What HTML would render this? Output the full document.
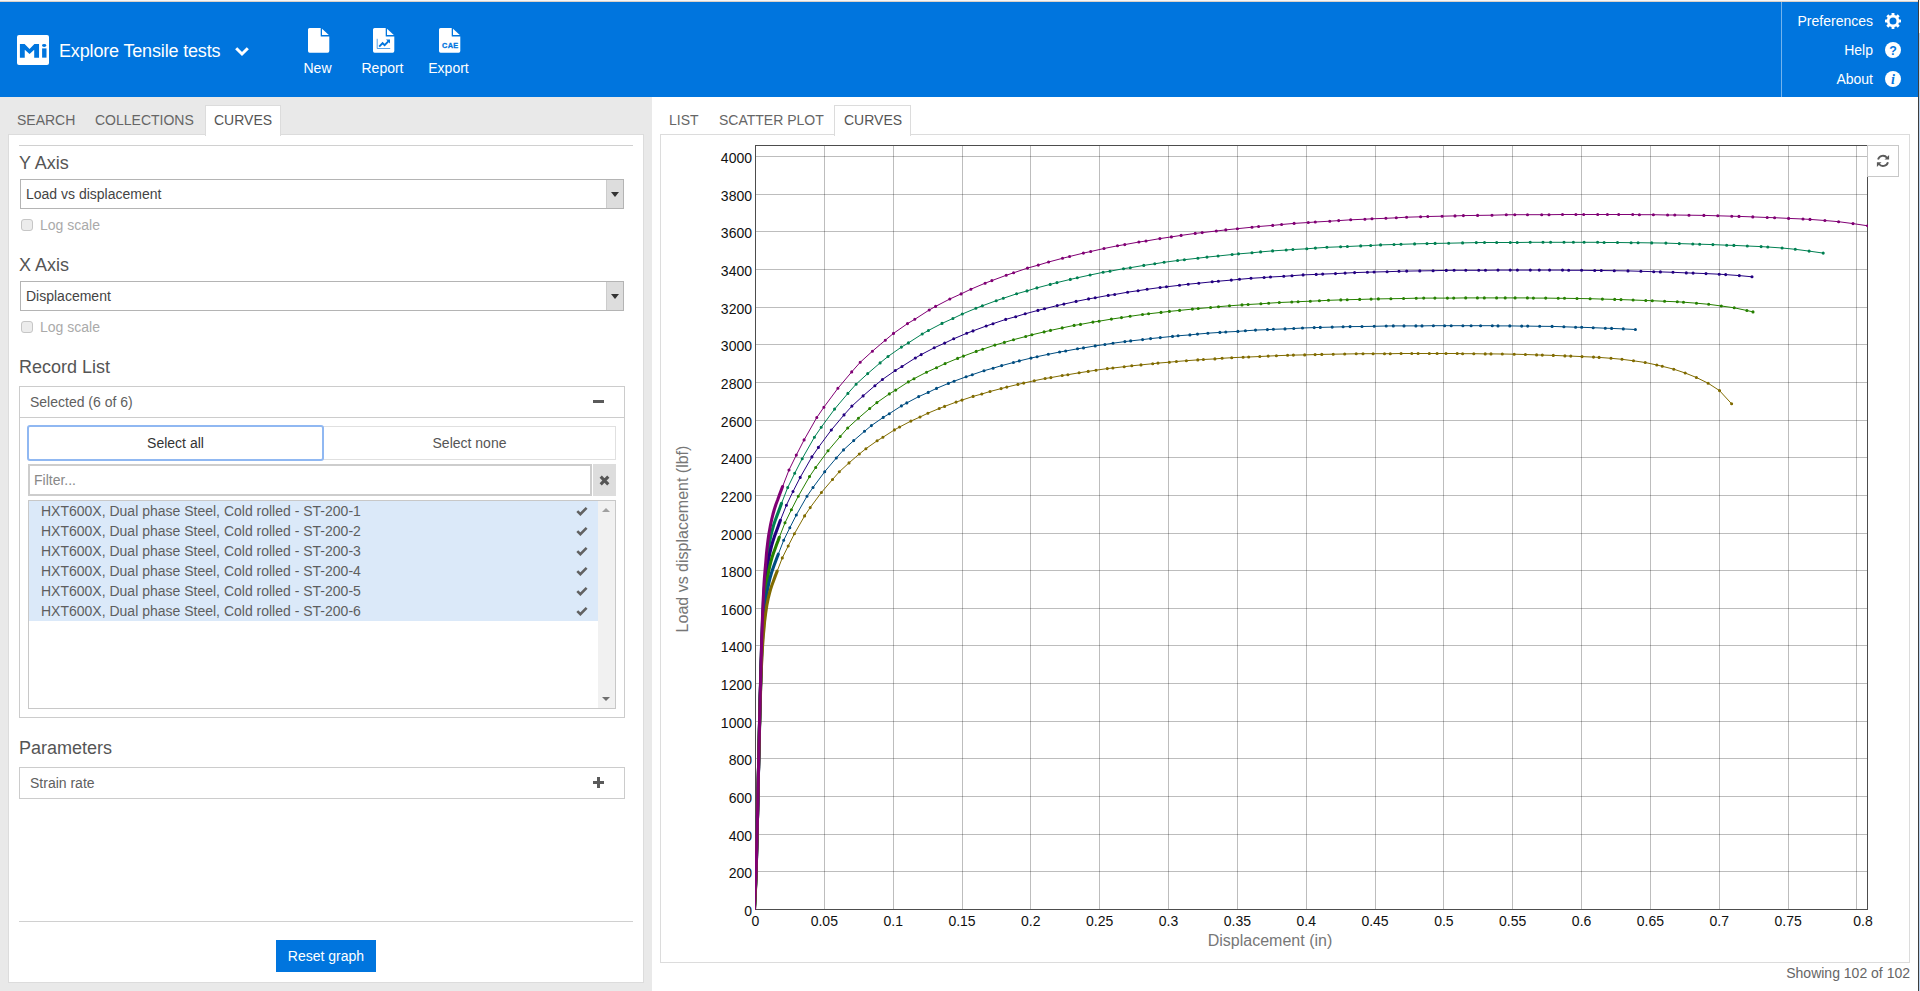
<!DOCTYPE html>
<html lang="en"><head><meta charset="utf-8"><title>Explore Tensile tests</title>
<style>
*{box-sizing:border-box;margin:0;padding:0}
html,body{width:1920px;height:991px;overflow:hidden;background:#fff}
body{font-family:"Liberation Sans",sans-serif;font-size:14px;color:#333;position:relative}
.abs{position:absolute}
#topstrip{left:0;top:0;width:1918px;height:2px;background:linear-gradient(#f6f6f6 0,#f6f6f6 1px,#dbd1c9 1px)}
#hdr{left:0;top:2px;width:1918px;height:95px;background:#0075de;color:#fff}
#hdr .t{position:absolute;white-space:nowrap;color:#fff}
#leftbg{left:0;top:97px;width:652px;height:894px;background:#e9e9e9}
#leftpanel{left:8px;top:134px;width:636px;height:849px;background:#fff;border:1px solid #dcdcdc}
.tab{position:absolute;top:105px;height:30px;line-height:30px;font-size:14px;color:#666;white-space:nowrap}
.tab.act{background:#fff;border:1px solid #dcdcdc;border-bottom:none;color:#555;height:31px;line-height:28px}
.h{position:absolute;font-size:18px;color:#555;white-space:nowrap;line-height:20px}
.sel{position:absolute;left:20px;width:604px;height:30px;border:1px solid #b4b4b4;background:#fff}
.sel span{position:absolute;left:5px;top:0;line-height:28px;font-size:14px;color:#444}
.sel i{position:absolute;right:0;top:0;width:17px;height:28px;background:#ddd;border-left:1px solid #ccc}
.sel i:after{content:"";position:absolute;left:4px;top:12px;border:4px solid transparent;border-top:5px solid #333;border-bottom:none}
.cb{position:absolute;left:21px;width:12px;height:12px;border:1px solid #c6c6c6;border-radius:3px;background:#ececec}
.cbl{position:absolute;left:40px;font-size:14px;color:#aaa;line-height:16px;white-space:nowrap}
.box{position:absolute;border:1px solid #ccc;background:#fff}
.hr{position:absolute;height:1px;background:#d0d0d0}
.li{position:absolute;left:0;width:569px;height:20px;background:#dbe9f9;font-size:14px;line-height:20px;color:#5e5e5e;padding-left:12px;white-space:nowrap}
</style></head>
<body>
<div id="topstrip" class="abs"></div>
<div id="hdr" class="abs">
<div class="abs" style="left:17px;top:33px;width:32px;height:30px;background:#fff;border-radius:2px"></div>
<svg class="abs" style="left:17px;top:33px" width="32" height="30" viewBox="0 0 32 30"><path d="M2.9 22.65V8.9h4.7l4.95 5 4.85-5h4.65v13.75h-4.85v-7.85l-4.65 4.1-4.8-4.1v7.85z" fill="#0075de"/><rect x="25.1" y="13.4" width="4.4" height="9.25" fill="#0075de"/><ellipse cx="27.15" cy="10.5" rx="2.15" ry="1.45" fill="#0075de"/></svg>
<div class="t" style="left:59px;top:39px;font-size:18px;line-height:20px;letter-spacing:-0.16px">Explore Tensile tests</div>
<svg class="abs" style="left:234px;top:44px" width="16" height="12" viewBox="0 0 16 12"><path d="M2.2 2.2 L8 8 L13.8 2.2" fill="none" stroke="#fff" stroke-width="3" stroke-linecap="butt" stroke-linejoin="miter"/></svg>
<svg class="abs" style="left:308px;top:26px" width="22" height="25" viewBox="0 0 22 25"><path d="M1.6 0h11.1v7.9a0.5 0.5 0 0 0 0.5 0.5h8.1v14.7a1.6 1.6 0 0 1-1.6 1.6h-18.1a1.6 1.6 0 0 1-1.6-1.6v-21.5a1.6 1.6 0 0 1 1.6-1.6z" fill="#fff"/><path d="M14 0.7 L20.8 6.9 L14 6.9z" fill="#fff"/></svg>
<svg class="abs" style="left:373px;top:26px" width="22" height="25" viewBox="0 0 22 25"><path d="M1.6 0h11.1v7.9a0.5 0.5 0 0 0 0.5 0.5h8.1v14.7a1.6 1.6 0 0 1-1.6 1.6h-18.1a1.6 1.6 0 0 1-1.6-1.6v-21.5a1.6 1.6 0 0 1 1.6-1.6z" fill="#fff"/><path d="M14 0.7 L20.8 6.9 L14 6.9z" fill="#fff"/><path d="M4.2 10.8v9.7h13" fill="none" stroke="#0075de" stroke-width="0.9" opacity="0.75"/><path d="M6.2 18.6l3.4-3.4 2 1.9 4.2-4.2" fill="none" stroke="#0075de" stroke-width="1.9"/><path d="M13 11.6h4v4z" fill="#0075de"/></svg>
<svg class="abs" style="left:439px;top:26px" width="22" height="25" viewBox="0 0 22 25"><path d="M1.6 0h11.1v7.9a0.5 0.5 0 0 0 0.5 0.5h8.1v14.7a1.6 1.6 0 0 1-1.6 1.6h-18.1a1.6 1.6 0 0 1-1.6-1.6v-21.5a1.6 1.6 0 0 1 1.6-1.6z" fill="#fff"/><path d="M14 0.7 L20.8 6.9 L14 6.9z" fill="#fff"/><text x="11.2" y="20.3" font-family="Liberation Sans, sans-serif" font-weight="bold" font-size="7.3" fill="#0075de" stroke="#0075de" stroke-width="0.3" text-anchor="middle" letter-spacing="0.25">CAE</text></svg>
<div class="t" style="left:317.5px;top:58px;width:100px;margin-left:-50px;text-align:center;font-size:14px;line-height:16px">New</div>
<div class="t" style="left:382.5px;top:58px;width:100px;margin-left:-50px;text-align:center;font-size:14px;line-height:16px">Report</div>
<div class="t" style="left:448.5px;top:58px;width:100px;margin-left:-50px;text-align:center;font-size:14px;line-height:16px">Export</div>
<div class="abs" style="left:1781px;top:0;width:1px;height:95px;background:rgba(255,255,255,0.45)"></div>
<div class="t" style="right:45px;top:11px;font-size:14px;line-height:16px">Preferences</div>
<div class="t" style="right:45px;top:40px;font-size:14px;line-height:16px">Help</div>
<div class="t" style="right:45px;top:69px;font-size:14px;line-height:16px">About</div>
<svg class="abs" style="left:1885px;top:11px" width="16" height="16" viewBox="0 0 16 16"><g fill="#fff"><path fill-rule="evenodd" d="M8 1.8a6.2 6.2 0 1 0 0 12.4a6.2 6.2 0 1 0 0-12.4zM8 4.5a3.5 3.5 0 1 1 0 7a3.5 3.5 0 1 1 0-7z"/><rect x="6.55" y="0" width="2.9" height="3" rx="0.4" transform="rotate(0 8 8)"/><rect x="6.55" y="0" width="2.9" height="3" rx="0.4" transform="rotate(45 8 8)"/><rect x="6.55" y="0" width="2.9" height="3" rx="0.4" transform="rotate(90 8 8)"/><rect x="6.55" y="0" width="2.9" height="3" rx="0.4" transform="rotate(135 8 8)"/><rect x="6.55" y="0" width="2.9" height="3" rx="0.4" transform="rotate(180 8 8)"/><rect x="6.55" y="0" width="2.9" height="3" rx="0.4" transform="rotate(225 8 8)"/><rect x="6.55" y="0" width="2.9" height="3" rx="0.4" transform="rotate(270 8 8)"/><rect x="6.55" y="0" width="2.9" height="3" rx="0.4" transform="rotate(315 8 8)"/></g></svg>
<svg class="abs" style="left:1885px;top:40px" width="16" height="16" viewBox="0 0 16 16"><circle cx="8" cy="8" r="8" fill="#fff"/><text x="8" y="12.6" font-family="Liberation Sans, sans-serif" font-weight="bold" font-size="12.4" fill="#0075de" text-anchor="middle">?</text></svg>
<svg class="abs" style="left:1885px;top:69px" width="16" height="16" viewBox="0 0 16 16"><circle cx="8" cy="8" r="8" fill="#fff"/><text x="8" y="12.8" font-family="Liberation Serif, serif" font-weight="bold" font-style="italic" font-size="14" fill="#0075de" text-anchor="middle">i</text></svg>
</div>
<div id="leftbg" class="abs"></div>
<div id="leftpanel" class="abs"></div>
<div class="tab" style="left:17px">SEARCH</div>
<div class="tab" style="left:95px">COLLECTIONS</div>
<div class="tab act" style="left:205px;width:76px;padding-left:8px">CURVES</div>
<div class="hr" style="left:19px;top:145px;width:614px"></div>
<div class="h" style="left:19px;top:153px">Y Axis</div>
<div class="sel" style="top:179px"><span>Load vs displacement</span><i></i></div>
<div class="cb" style="top:219px"></div><div class="cbl" style="top:217px">Log scale</div>
<div class="h" style="left:19px;top:255px">X Axis</div>
<div class="sel" style="top:281px"><span>Displacement</span><i></i></div>
<div class="cb" style="top:321px"></div><div class="cbl" style="top:319px">Log scale</div>
<div class="h" style="left:19px;top:357px">Record List</div>
<div class="box" style="left:19px;top:386px;width:606px;height:332px"></div>
<div class="hr" style="left:20px;top:417px;width:604px;background:#ccc"></div>
<div class="abs" style="left:30px;top:394px;font-size:14px;line-height:16px;color:#606060">Selected (6 of 6)</div>
<div class="abs" style="left:593px;top:400px;width:11px;height:3px;background:#5a5a5a"></div>
<div class="abs" style="left:323px;top:426px;width:293px;height:34px;border:1px solid #e0e0e0;background:#fff;text-align:center;line-height:32px;font-size:14px;color:#555">Select none</div>
<div class="abs" style="left:27px;top:425px;width:297px;height:36px;border:2px solid #90b8f2;border-radius:3px;background:#fff;text-align:center;line-height:32px;font-size:14px;color:#333">Select all</div>
<div class="abs" style="left:28px;top:464px;width:564px;height:32px;border:2px solid #cdcdcd;background:#fff;padding-left:4px;line-height:28px;font-size:14px;color:#888">Filter...</div>
<div class="abs" style="left:593px;top:464px;width:23px;height:32px;background:#ddd"></div>
<svg class="abs" style="left:599px;top:475px" width="11" height="11" viewBox="0 0 11 11"><path d="M1.7 1.7l7.6 7.6M9.3 1.7l-7.6 7.6" stroke="#555" stroke-width="3.1" fill="none"/></svg>
<div class="box" style="left:28px;top:500px;width:588px;height:209px;border-color:#c8c8c8">
<div class="li" style="top:0px">HXT600X, Dual phase Steel, Cold rolled - ST-200-1</div>
<svg class="abs" style="left:547px;top:5px" width="12" height="10" viewBox="0 0 12 10"><path d="M1.3 5.1l3.1 3.1 6.2-6.4" fill="none" stroke="#626262" stroke-width="2.6"/></svg>
<div class="li" style="top:20px">HXT600X, Dual phase Steel, Cold rolled - ST-200-2</div>
<svg class="abs" style="left:547px;top:25px" width="12" height="10" viewBox="0 0 12 10"><path d="M1.3 5.1l3.1 3.1 6.2-6.4" fill="none" stroke="#626262" stroke-width="2.6"/></svg>
<div class="li" style="top:40px">HXT600X, Dual phase Steel, Cold rolled - ST-200-3</div>
<svg class="abs" style="left:547px;top:45px" width="12" height="10" viewBox="0 0 12 10"><path d="M1.3 5.1l3.1 3.1 6.2-6.4" fill="none" stroke="#626262" stroke-width="2.6"/></svg>
<div class="li" style="top:60px">HXT600X, Dual phase Steel, Cold rolled - ST-200-4</div>
<svg class="abs" style="left:547px;top:65px" width="12" height="10" viewBox="0 0 12 10"><path d="M1.3 5.1l3.1 3.1 6.2-6.4" fill="none" stroke="#626262" stroke-width="2.6"/></svg>
<div class="li" style="top:80px">HXT600X, Dual phase Steel, Cold rolled - ST-200-5</div>
<svg class="abs" style="left:547px;top:85px" width="12" height="10" viewBox="0 0 12 10"><path d="M1.3 5.1l3.1 3.1 6.2-6.4" fill="none" stroke="#626262" stroke-width="2.6"/></svg>
<div class="li" style="top:100px">HXT600X, Dual phase Steel, Cold rolled - ST-200-6</div>
<svg class="abs" style="left:547px;top:105px" width="12" height="10" viewBox="0 0 12 10"><path d="M1.3 5.1l3.1 3.1 6.2-6.4" fill="none" stroke="#626262" stroke-width="2.6"/></svg>
<div class="abs" style="left:569px;top:0;width:17px;height:207px;background:#f1f1f1"></div>
<div class="abs" style="left:573px;top:7px;border:4px solid transparent;border-bottom:4px solid #a0a0a0;border-top:none"></div>
<div class="abs" style="left:573px;top:196px;border:4px solid transparent;border-top:4px solid #707070;border-bottom:none"></div>
</div>
<div class="h" style="left:19px;top:738px">Parameters</div>
<div class="box" style="left:19px;top:767px;width:606px;height:32px"></div>
<div class="abs" style="left:30px;top:775px;font-size:14px;line-height:16px;color:#606060">Strain rate</div>
<div class="abs" style="left:593px;top:781px;width:11px;height:3px;background:#5a5a5a"></div><div class="abs" style="left:597px;top:777px;width:3px;height:11px;background:#5a5a5a"></div>
<div class="hr" style="left:19px;top:921px;width:614px"></div>
<div class="abs" style="left:276px;top:940px;width:100px;height:32px;background:#0075de;color:#fff;text-align:center;line-height:32px;font-size:14px">Reset graph</div>
<div class="abs" style="left:660px;top:134px;width:1250px;height:829px;border:1px solid #dcdcdc;background:#fff"></div>
<div class="tab" style="left:669px">LIST</div>
<div class="tab" style="left:719px">SCATTER PLOT</div>
<div class="tab act" style="left:834px;width:77px;padding-left:9px">CURVES</div>
<div class="abs" style="right:10px;top:965px;font-size:14px;line-height:16px;color:#666;white-space:nowrap">Showing 102 of 102</div>
<div class="abs" style="left:1918px;top:0;width:1px;height:991px;background:#3c3c3c"></div>
<div class="abs" style="left:1919px;top:0;width:1px;height:991px;background:linear-gradient(#fff 0,#fff 33px,#bcd3ee 33px)"></div>
<svg class="abs" style="left:0;top:0" width="1920" height="991" viewBox="0 0 1920 991">
<path d="M824.5 146 V910 M893.5 146 V910 M962.5 146 V910 M1030.5 146 V910 M1099.5 146 V910 M1168.5 146 V910 M1237.5 146 V910 M1306.5 146 V910 M1375.5 146 V910 M1443.5 146 V910 M1512.5 146 V910 M1581.5 146 V910 M1650.5 146 V910 M1719.5 146 V910 M1788.5 146 V910 M1856.5 146 V910" stroke="#000" stroke-opacity="0.26" stroke-width="1" fill="none" shape-rendering="crispEdges"/>
<path d="M755 871.5 H1867 M755 834.5 H1867 M755 796.5 H1867 M755 758.5 H1867 M755 721.5 H1867 M755 683.5 H1867 M755 645.5 H1867 M755 608.5 H1867 M755 570.5 H1867 M755 533.5 H1867 M755 495.5 H1867 M755 457.5 H1867 M755 420.5 H1867 M755 382.5 H1867 M755 344.5 H1867 M755 307.5 H1867 M755 269.5 H1867 M755 231.5 H1867 M755 194.5 H1867 M755 156.5 H1867" stroke="#000" stroke-opacity="0.26" stroke-width="1" fill="none" shape-rendering="crispEdges"/>
<path d="M755.5 145.5 H1867.5 V909.5 H755.5 Z" stroke="#4d4d4d" stroke-width="1" fill="none" shape-rendering="crispEdges"/>
<clipPath id="cp"><rect x="755" y="146" width="1113" height="764"/></clipPath>
<g clip-path="url(#cp)">
<path d="M754.3 909.5 L754.6 904.7 L754.8 899.9 L755.0 895.1 L755.2 890.3 L755.5 885.5 L755.7 880.7 L755.9 875.9 L756.1 871.1 L756.2 866.3 L756.4 861.5 L756.5 856.7 L756.6 851.9 L756.7 847.1 L756.9 842.3 L757.0 837.5 L757.1 832.7 L757.2 827.9 L757.3 823.1 L757.5 818.3 L757.6 813.5 L757.7 808.7 L757.8 803.9 L757.9 799.1 L758.0 794.3 L758.1 789.5 L758.2 784.7 L758.3 779.9 L758.4 775.1 L758.5 770.3 L758.6 765.5 L758.7 760.7 L758.8 755.9 L758.9 751.1 L759.0 746.3 L759.1 741.5 L759.2 736.7 L759.3 731.9 L759.4 727.1 L759.6 722.3 L759.7 717.5 L759.8 712.7 L759.9 707.9 L760.0 703.1 L760.1 698.3 L760.3 693.5 L760.4 688.7 L760.5 683.9 L760.6 679.1 L760.8 674.3 L760.9 669.5 L761.0 664.7 L761.2 659.9 L761.3 655.1 L761.5 650.3 L761.6 645.5 L761.8 640.7 L762.0 635.9 L762.1 631.1 L762.3 626.3 L762.5 621.5 L762.7 616.7 L762.9 611.9 L763.1 607.1 L763.4 602.3 L763.7 597.5 L764.0 592.7 L764.4 587.9 L764.8 583.1 L765.2 578.3 L765.6 573.5 L766.0 568.7 L766.5 563.9 L767.0 559.1 L767.6 554.3 L768.3 549.5 L769.1 544.7 L770.0 539.9 L771.0 535.1 L772.2 530.3 L773.5 525.5 L775.1 520.7 L776.8 516.1 L778.5 511.6 L780.2 507.0 L781.5 503.4 L787.7 487.6 L794.7 473.3 L802.2 458.7 L814.4 437.2 L821.2 427.3 L834.6 409.1 L847.9 393.4 L856.1 384.2 L867.7 373.6 L880.1 362.9 L888.0 356.5 L901.4 347.1 L908.4 342.9 L922.2 334.0 L928.4 330.5 L942.0 323.4 L952.9 318.5 L962.3 314.0 L975.9 308.3 L982.4 305.8 L996.2 300.7 L1003.3 298.3 L1016.6 293.8 L1027.0 290.9 L1036.9 287.9 L1050.2 284.4 L1057.0 282.6 L1070.3 279.4 L1077.3 277.8 L1090.1 275.0 L1103.1 272.3 L1110.0 271.2 L1123.5 268.7 L1130.3 267.7 L1143.8 265.4 L1154.8 263.8 L1164.1 262.3 L1177.6 260.5 L1184.4 259.7 L1197.9 258.2 L1207.0 257.1 L1218.1 256.0 L1232.1 254.5 L1238.5 253.9 L1252.0 252.8 L1260.6 251.9 L1272.6 250.9 L1286.2 250.0 L1292.9 249.5 L1306.8 248.8 L1315.4 248.1 L1326.9 247.3 L1340.6 246.8 L1347.4 246.5 L1360.7 245.9 L1370.7 245.5 L1380.6 244.9 L1394.0 244.5 L1401.0 244.3 L1414.6 243.9 L1427.0 243.6 L1435.1 243.4 L1448.7 243.2 L1462.6 242.9 L1476.3 242.6 L1484.5 242.5 L1496.7 242.5 L1510.3 242.5 L1517.2 242.5 L1530.2 242.3 L1543.0 242.3 L1550.6 242.3 L1564.0 242.3 L1573.4 242.3 L1584.1 242.3 L1597.6 242.3 L1604.1 242.5 L1617.5 242.5 L1631.1 242.7 L1638.1 242.7 L1651.7 242.9 L1665.9 243.1 L1679.3 243.6 L1692.8 244.0 L1699.7 244.2 L1712.9 244.6 L1726.7 245.2 L1733.9 245.4 L1747.3 246.0 L1761.1 246.6 L1767.8 247.0 L1782.1 248.0 L1795.3 249.3 L1809.1 251.1 L1823.2 253.1" fill="none" stroke="#008052" stroke-width="1"/>
<path d="M754.3 909.5 L754.6 904.7 L754.8 899.9 L755.0 895.1 L755.2 890.3 L755.5 885.5 L755.7 880.7 L755.9 875.9 L756.1 871.1 L756.2 866.3 L756.4 861.5 L756.5 856.7 L756.6 851.9 L756.7 847.1 L756.9 842.3 L757.0 837.5 L757.1 832.7 L757.2 827.9 L757.3 823.1 L757.5 818.3 L757.6 813.5 L757.7 808.7 L757.8 803.9 L757.9 799.1 L758.0 794.3 L758.1 789.5 L758.2 784.7 L758.3 779.9 L758.4 775.1 L758.5 770.3 L758.6 765.5 L758.7 760.7 L758.8 755.9 L758.9 751.1 L759.0 746.3 L759.1 741.5 L759.2 736.7 L759.3 731.9 L759.4 727.1 L759.6 722.3 L759.7 717.5 L759.8 712.7 L759.9 707.9 L760.0 703.1 L760.1 698.3 L760.3 693.5 L760.4 688.7 L760.5 683.9 L760.6 679.1 L760.8 674.3 L760.9 669.5 L761.0 664.7 L761.2 659.9 L761.3 655.1 L761.5 650.3 L761.6 645.5 L761.8 640.7 L762.0 635.9 L762.1 631.1 L762.3 626.3 L762.5 621.5 L762.7 616.7 L762.9 611.9 L763.1 607.1 L763.4 602.3 L763.7 597.5 L764.0 592.7 L764.4 587.9 L764.8 583.1 L765.2 578.3 L765.6 573.5 L766.0 568.7 L766.5 563.9 L767.0 559.1 L767.6 554.3 L768.3 549.5 L769.1 544.7 L770.0 539.9 L771.0 535.1 L772.2 530.3 L773.5 525.5 L775.1 520.7 L776.8 516.1 L778.5 511.6 L780.2 507.0 L781.5 503.4" fill="none" stroke="#008052" stroke-width="3.1" stroke-linecap="round" stroke-linejoin="round"/>
<path d="M787.7 487.6h0M794.7 473.3h0M802.2 458.7h0M814.4 437.2h0M821.2 427.3h0M834.6 409.1h0M847.9 393.4h0M856.1 384.2h0M867.7 373.6h0M880.1 362.9h0M888.0 356.5h0M901.4 347.1h0M908.4 342.9h0M922.2 334.0h0M928.4 330.5h0M942.0 323.4h0M952.9 318.5h0M962.3 314.0h0M975.9 308.3h0M982.4 305.8h0M996.2 300.7h0M1003.3 298.3h0M1016.6 293.8h0M1027.0 290.9h0M1036.9 287.9h0M1050.2 284.4h0M1057.0 282.6h0M1070.3 279.4h0M1077.3 277.8h0M1090.1 275.0h0M1103.1 272.3h0M1110.0 271.2h0M1123.5 268.7h0M1130.3 267.7h0M1143.8 265.4h0M1154.8 263.8h0M1164.1 262.3h0M1177.6 260.5h0M1184.4 259.7h0M1197.9 258.2h0M1207.0 257.1h0M1218.1 256.0h0M1232.1 254.5h0M1238.5 253.9h0M1252.0 252.8h0M1260.6 251.9h0M1272.6 250.9h0M1286.2 250.0h0M1292.9 249.5h0M1306.8 248.8h0M1315.4 248.1h0M1326.9 247.3h0M1340.6 246.8h0M1347.4 246.5h0M1360.7 245.9h0M1370.7 245.5h0M1380.6 244.9h0M1394.0 244.5h0M1401.0 244.3h0M1414.6 243.9h0M1427.0 243.6h0M1435.1 243.4h0M1448.7 243.2h0M1462.6 242.9h0M1476.3 242.6h0M1484.5 242.5h0M1496.7 242.5h0M1510.3 242.5h0M1517.2 242.5h0M1530.2 242.3h0M1543.0 242.3h0M1550.6 242.3h0M1564.0 242.3h0M1573.4 242.3h0M1584.1 242.3h0M1597.6 242.3h0M1604.1 242.5h0M1617.5 242.5h0M1631.1 242.7h0M1638.1 242.7h0M1651.7 242.9h0M1665.9 243.1h0M1679.3 243.6h0M1692.8 244.0h0M1699.7 244.2h0M1712.9 244.6h0M1726.7 245.2h0M1733.9 245.4h0M1747.3 246.0h0M1761.1 246.6h0M1767.8 247.0h0M1782.1 248.0h0M1795.3 249.3h0M1809.1 251.1h0M1823.2 253.1h0" fill="none" stroke="#008052" stroke-width="3.1" stroke-linecap="round"/>
<path d="M754.4 909.5 L754.6 904.9 L754.8 900.3 L755.0 895.7 L755.3 891.1 L755.5 886.5 L755.7 881.9 L755.9 877.3 L756.0 872.7 L756.2 868.1 L756.3 863.5 L756.5 858.9 L756.6 854.3 L756.7 849.7 L756.8 845.1 L756.9 840.5 L757.0 835.9 L757.1 831.3 L757.3 826.7 L757.4 822.1 L757.5 817.5 L757.6 812.9 L757.7 808.3 L757.8 803.7 L757.9 799.1 L758.0 794.5 L758.1 789.9 L758.2 785.3 L758.3 780.7 L758.4 776.1 L758.5 771.5 L758.6 766.9 L758.7 762.3 L758.8 757.7 L758.9 753.1 L759.0 748.5 L759.1 743.9 L759.2 739.3 L759.3 734.7 L759.4 730.1 L759.5 725.5 L759.6 720.9 L759.7 716.3 L759.8 711.7 L760.0 707.1 L760.1 702.5 L760.2 697.9 L760.3 693.3 L760.4 688.7 L760.6 684.1 L760.7 679.5 L760.8 674.9 L760.9 670.3 L761.1 665.7 L761.2 661.1 L761.4 656.5 L761.5 651.9 L761.7 647.3 L761.9 642.7 L762.0 638.1 L762.2 633.5 L762.4 628.9 L762.6 624.3 L762.8 619.7 L763.1 615.1 L763.3 610.5 L763.6 605.9 L764.0 601.3 L764.4 596.7 L764.7 592.1 L765.1 587.5 L765.6 582.9 L766.0 578.3 L766.5 573.7 L767.1 569.1 L767.8 564.5 L768.5 559.9 L769.4 555.3 L770.4 550.7 L771.5 546.1 L772.8 541.5 L774.3 536.9 L775.9 532.5 L777.5 528.2 L779.1 523.8 L780.4 520.3 L786.4 505.2 L793.0 491.5 L800.2 477.4 L811.9 456.9 L818.4 447.4 L831.3 430.0 L844.0 414.9 L851.9 406.1 L863.1 395.9 L874.9 385.7 L882.4 379.5 L895.3 370.5 L902.0 366.5 L915.3 358.0 L921.2 354.6 L934.2 347.8 L944.7 343.1 L953.7 338.8 L966.7 333.3 L973.0 330.9 L986.2 326.0 L993.0 323.7 L1005.7 319.4 L1015.7 316.7 L1025.2 313.8 L1037.9 310.4 L1044.5 308.7 L1057.2 305.6 L1063.9 304.1 L1076.1 301.4 L1088.6 298.9 L1095.2 297.8 L1108.2 295.4 L1114.7 294.5 L1127.6 292.2 L1138.1 290.7 L1147.1 289.3 L1160.1 287.5 L1166.5 286.8 L1179.5 285.3 L1188.2 284.2 L1198.8 283.2 L1212.2 281.8 L1218.4 281.2 L1231.3 280.1 L1239.5 279.3 L1251.0 278.3 L1264.1 277.5 L1270.5 277.0 L1283.8 276.3 L1292.0 275.7 L1303.1 274.9 L1316.2 274.4 L1322.7 274.1 L1335.5 273.6 L1345.1 273.1 L1354.6 272.6 L1367.4 272.2 L1374.1 272.0 L1387.1 271.7 L1399.0 271.3 L1406.7 271.1 L1419.8 270.9 L1433.1 270.7 L1446.3 270.4 L1454.1 270.3 L1465.8 270.3 L1478.8 270.3 L1485.5 270.3 L1498.0 270.1 L1510.2 270.1 L1517.4 270.1 L1530.3 270.1 L1539.3 270.1 L1549.6 270.1 L1562.5 270.1 L1568.7 270.3 L1581.6 270.3 L1594.7 270.5 L1601.3 270.5 L1614.3 270.7 L1628.0 270.9 L1640.9 271.3 L1653.7 271.7 L1660.4 271.9 L1673.0 272.3 L1686.3 272.9 L1693.1 273.1 L1706.0 273.6 L1719.2 274.2 L1725.7 274.6 L1739.3 275.6 L1752.0 276.8" fill="none" stroke="#230080" stroke-width="1"/>
<path d="M754.4 909.5 L754.6 904.9 L754.8 900.3 L755.0 895.7 L755.3 891.1 L755.5 886.5 L755.7 881.9 L755.9 877.3 L756.0 872.7 L756.2 868.1 L756.3 863.5 L756.5 858.9 L756.6 854.3 L756.7 849.7 L756.8 845.1 L756.9 840.5 L757.0 835.9 L757.1 831.3 L757.3 826.7 L757.4 822.1 L757.5 817.5 L757.6 812.9 L757.7 808.3 L757.8 803.7 L757.9 799.1 L758.0 794.5 L758.1 789.9 L758.2 785.3 L758.3 780.7 L758.4 776.1 L758.5 771.5 L758.6 766.9 L758.7 762.3 L758.8 757.7 L758.9 753.1 L759.0 748.5 L759.1 743.9 L759.2 739.3 L759.3 734.7 L759.4 730.1 L759.5 725.5 L759.6 720.9 L759.7 716.3 L759.8 711.7 L760.0 707.1 L760.1 702.5 L760.2 697.9 L760.3 693.3 L760.4 688.7 L760.6 684.1 L760.7 679.5 L760.8 674.9 L760.9 670.3 L761.1 665.7 L761.2 661.1 L761.4 656.5 L761.5 651.9 L761.7 647.3 L761.9 642.7 L762.0 638.1 L762.2 633.5 L762.4 628.9 L762.6 624.3 L762.8 619.7 L763.1 615.1 L763.3 610.5 L763.6 605.9 L764.0 601.3 L764.4 596.7 L764.7 592.1 L765.1 587.5 L765.6 582.9 L766.0 578.3 L766.5 573.7 L767.1 569.1 L767.8 564.5 L768.5 559.9 L769.4 555.3 L770.4 550.7 L771.5 546.1 L772.8 541.5 L774.3 536.9 L775.9 532.5 L777.5 528.2 L779.1 523.8 L780.4 520.3" fill="none" stroke="#230080" stroke-width="3.1" stroke-linecap="round" stroke-linejoin="round"/>
<path d="M786.4 505.2h0M793.0 491.5h0M800.2 477.4h0M811.9 456.9h0M818.4 447.4h0M831.3 430.0h0M844.0 414.9h0M851.9 406.1h0M863.1 395.9h0M874.9 385.7h0M882.4 379.5h0M895.3 370.5h0M902.0 366.5h0M915.3 358.0h0M921.2 354.6h0M934.2 347.8h0M944.7 343.1h0M953.7 338.8h0M966.7 333.3h0M973.0 330.9h0M986.2 326.0h0M993.0 323.7h0M1005.7 319.4h0M1015.7 316.7h0M1025.2 313.8h0M1037.9 310.4h0M1044.5 308.7h0M1057.2 305.6h0M1063.9 304.1h0M1076.1 301.4h0M1088.6 298.9h0M1095.2 297.8h0M1108.2 295.4h0M1114.7 294.5h0M1127.6 292.2h0M1138.1 290.7h0M1147.1 289.3h0M1160.1 287.5h0M1166.5 286.8h0M1179.5 285.3h0M1188.2 284.2h0M1198.8 283.2h0M1212.2 281.8h0M1218.4 281.2h0M1231.3 280.1h0M1239.5 279.3h0M1251.0 278.3h0M1264.1 277.5h0M1270.5 277.0h0M1283.8 276.3h0M1292.0 275.7h0M1303.1 274.9h0M1316.2 274.4h0M1322.7 274.1h0M1335.5 273.6h0M1345.1 273.1h0M1354.6 272.6h0M1367.4 272.2h0M1374.1 272.0h0M1387.1 271.7h0M1399.0 271.3h0M1406.7 271.1h0M1419.8 270.9h0M1433.1 270.7h0M1446.3 270.4h0M1454.1 270.3h0M1465.8 270.3h0M1478.8 270.3h0M1485.5 270.3h0M1498.0 270.1h0M1510.2 270.1h0M1517.4 270.1h0M1530.3 270.1h0M1539.3 270.1h0M1549.6 270.1h0M1562.5 270.1h0M1568.7 270.3h0M1581.6 270.3h0M1594.7 270.5h0M1601.3 270.5h0M1614.3 270.7h0M1628.0 270.9h0M1640.9 271.3h0M1653.7 271.7h0M1660.4 271.9h0M1673.0 272.3h0M1686.3 272.9h0M1693.1 273.1h0M1706.0 273.6h0M1719.2 274.2h0M1725.7 274.6h0M1739.3 275.6h0M1752.0 276.8h0" fill="none" stroke="#230080" stroke-width="3.1" stroke-linecap="round"/>
<path d="M754.4 909.5 L754.7 905.1 L754.9 900.7 L755.1 896.3 L755.3 891.9 L755.5 887.5 L755.7 883.1 L755.9 878.7 L756.0 874.3 L756.2 869.9 L756.3 865.5 L756.4 861.1 L756.5 856.7 L756.6 852.3 L756.8 847.9 L756.9 843.5 L757.0 839.1 L757.1 834.7 L757.2 830.3 L757.3 825.9 L757.4 821.5 L757.5 817.1 L757.6 812.7 L757.7 808.3 L757.8 803.9 L757.9 799.5 L758.0 795.1 L758.1 790.7 L758.2 786.3 L758.2 781.9 L758.3 777.5 L758.4 773.1 L758.5 768.7 L758.6 764.3 L758.7 759.9 L758.8 755.5 L758.9 751.1 L759.0 746.7 L759.1 742.3 L759.2 737.9 L759.3 733.5 L759.4 729.1 L759.5 724.7 L759.7 720.3 L759.8 715.9 L759.9 711.5 L760.0 707.1 L760.1 702.7 L760.2 698.3 L760.3 693.9 L760.5 689.5 L760.6 685.1 L760.7 680.7 L760.8 676.3 L761.0 671.9 L761.1 667.5 L761.3 663.1 L761.4 658.7 L761.6 654.3 L761.8 649.9 L761.9 645.5 L762.1 641.1 L762.3 636.7 L762.5 632.3 L762.7 627.9 L763.0 623.5 L763.3 619.1 L763.6 614.7 L764.0 610.3 L764.3 605.9 L764.7 601.5 L765.1 597.1 L765.6 592.7 L766.0 588.3 L766.6 583.9 L767.2 579.5 L768.0 575.1 L768.8 570.7 L769.7 566.3 L770.8 561.9 L772.0 557.5 L773.5 553.1 L775.0 548.9 L776.5 544.7 L778.1 540.6 L779.3 537.3 L785.0 522.8 L791.4 509.7 L798.3 496.2 L809.5 476.6 L815.7 467.5 L828.0 450.8 L840.2 436.5 L847.7 428.0 L858.4 418.2 L869.7 408.5 L876.9 402.6 L889.3 393.9 L895.7 390.1 L908.3 381.9 L914.0 378.7 L926.5 372.2 L936.5 367.7 L945.1 363.6 L957.6 358.4 L963.5 356.1 L976.2 351.4 L982.7 349.2 L994.9 345.1 L1004.4 342.4 L1013.5 339.7 L1025.7 336.5 L1031.9 334.8 L1044.1 331.9 L1050.5 330.4 L1062.2 327.9 L1074.1 325.4 L1080.5 324.4 L1092.9 322.1 L1099.1 321.2 L1111.4 319.1 L1121.5 317.6 L1130.1 316.3 L1142.5 314.5 L1148.6 313.8 L1161.0 312.4 L1169.4 311.4 L1179.6 310.4 L1192.4 309.1 L1198.2 308.5 L1210.6 307.5 L1218.5 306.7 L1229.5 305.8 L1242.0 304.9 L1248.1 304.5 L1260.9 303.8 L1268.7 303.2 L1279.3 302.5 L1291.8 302.0 L1298.1 301.7 L1310.3 301.2 L1319.4 300.8 L1328.5 300.3 L1340.8 299.9 L1347.2 299.7 L1359.7 299.4 L1371.1 299.1 L1378.4 298.9 L1390.9 298.7 L1403.6 298.5 L1416.2 298.2 L1423.7 298.1 L1434.9 298.1 L1447.4 298.1 L1453.7 298.1 L1465.7 297.9 L1477.4 297.9 L1484.3 297.9 L1496.6 297.9 L1505.2 297.9 L1515.1 297.9 L1527.4 297.9 L1533.4 298.1 L1545.7 298.1 L1558.2 298.3 L1564.5 298.3 L1577.0 298.5 L1590.1 298.7 L1602.4 299.1 L1614.7 299.4 L1621.0 299.6 L1633.1 300.0 L1645.8 300.5 L1652.3 300.7 L1664.6 301.3 L1677.3 301.8 L1683.5 302.2 L1696.5 303.2 L1708.7 304.3 L1721.3 306.0 L1734.2 307.8 L1746.9 310.5 L1753.0 311.9" fill="none" stroke="#268000" stroke-width="1"/>
<path d="M754.4 909.5 L754.7 905.1 L754.9 900.7 L755.1 896.3 L755.3 891.9 L755.5 887.5 L755.7 883.1 L755.9 878.7 L756.0 874.3 L756.2 869.9 L756.3 865.5 L756.4 861.1 L756.5 856.7 L756.6 852.3 L756.8 847.9 L756.9 843.5 L757.0 839.1 L757.1 834.7 L757.2 830.3 L757.3 825.9 L757.4 821.5 L757.5 817.1 L757.6 812.7 L757.7 808.3 L757.8 803.9 L757.9 799.5 L758.0 795.1 L758.1 790.7 L758.2 786.3 L758.2 781.9 L758.3 777.5 L758.4 773.1 L758.5 768.7 L758.6 764.3 L758.7 759.9 L758.8 755.5 L758.9 751.1 L759.0 746.7 L759.1 742.3 L759.2 737.9 L759.3 733.5 L759.4 729.1 L759.5 724.7 L759.7 720.3 L759.8 715.9 L759.9 711.5 L760.0 707.1 L760.1 702.7 L760.2 698.3 L760.3 693.9 L760.5 689.5 L760.6 685.1 L760.7 680.7 L760.8 676.3 L761.0 671.9 L761.1 667.5 L761.3 663.1 L761.4 658.7 L761.6 654.3 L761.8 649.9 L761.9 645.5 L762.1 641.1 L762.3 636.7 L762.5 632.3 L762.7 627.9 L763.0 623.5 L763.3 619.1 L763.6 614.7 L764.0 610.3 L764.3 605.9 L764.7 601.5 L765.1 597.1 L765.6 592.7 L766.0 588.3 L766.6 583.9 L767.2 579.5 L768.0 575.1 L768.8 570.7 L769.7 566.3 L770.8 561.9 L772.0 557.5 L773.5 553.1 L775.0 548.9 L776.5 544.7 L778.1 540.6 L779.3 537.3" fill="none" stroke="#268000" stroke-width="3.1" stroke-linecap="round" stroke-linejoin="round"/>
<path d="M785.0 522.8h0M791.4 509.7h0M798.3 496.2h0M809.5 476.6h0M815.7 467.5h0M828.0 450.8h0M840.2 436.5h0M847.7 428.0h0M858.4 418.2h0M869.7 408.5h0M876.9 402.6h0M889.3 393.9h0M895.7 390.1h0M908.3 381.9h0M914.0 378.7h0M926.5 372.2h0M936.5 367.7h0M945.1 363.6h0M957.6 358.4h0M963.5 356.1h0M976.2 351.4h0M982.7 349.2h0M994.9 345.1h0M1004.4 342.4h0M1013.5 339.7h0M1025.7 336.5h0M1031.9 334.8h0M1044.1 331.9h0M1050.5 330.4h0M1062.2 327.9h0M1074.1 325.4h0M1080.5 324.4h0M1092.9 322.1h0M1099.1 321.2h0M1111.4 319.1h0M1121.5 317.6h0M1130.1 316.3h0M1142.5 314.5h0M1148.6 313.8h0M1161.0 312.4h0M1169.4 311.4h0M1179.6 310.4h0M1192.4 309.1h0M1198.2 308.5h0M1210.6 307.5h0M1218.5 306.7h0M1229.5 305.8h0M1242.0 304.9h0M1248.1 304.5h0M1260.9 303.8h0M1268.7 303.2h0M1279.3 302.5h0M1291.8 302.0h0M1298.1 301.7h0M1310.3 301.2h0M1319.4 300.8h0M1328.5 300.3h0M1340.8 299.9h0M1347.2 299.7h0M1359.7 299.4h0M1371.1 299.1h0M1378.4 298.9h0M1390.9 298.7h0M1403.6 298.5h0M1416.2 298.2h0M1423.7 298.1h0M1434.9 298.1h0M1447.4 298.1h0M1453.7 298.1h0M1465.7 297.9h0M1477.4 297.9h0M1484.3 297.9h0M1496.6 297.9h0M1505.2 297.9h0M1515.1 297.9h0M1527.4 297.9h0M1533.4 298.1h0M1545.7 298.1h0M1558.2 298.3h0M1564.5 298.3h0M1577.0 298.5h0M1590.1 298.7h0M1602.4 299.1h0M1614.7 299.4h0M1621.0 299.6h0M1633.1 300.0h0M1645.8 300.5h0M1652.3 300.7h0M1664.6 301.3h0M1677.3 301.8h0M1683.5 302.2h0M1696.5 303.2h0M1708.7 304.3h0M1721.3 306.0h0M1734.2 307.8h0M1746.9 310.5h0M1753.0 311.9h0" fill="none" stroke="#268000" stroke-width="3.1" stroke-linecap="round"/>
<path d="M754.5 909.5 L754.7 905.3 L754.9 901.1 L755.1 896.9 L755.3 892.7 L755.5 888.5 L755.7 884.3 L755.8 880.1 L756.0 875.9 L756.1 871.7 L756.2 867.5 L756.4 863.3 L756.5 859.1 L756.6 854.9 L756.7 850.7 L756.8 846.5 L756.9 842.3 L757.0 838.1 L757.1 833.9 L757.2 829.7 L757.3 825.5 L757.4 821.3 L757.5 817.1 L757.6 812.9 L757.7 808.7 L757.8 804.5 L757.9 800.3 L757.9 796.1 L758.0 791.9 L758.1 787.7 L758.2 783.5 L758.3 779.3 L758.4 775.1 L758.5 770.9 L758.6 766.7 L758.7 762.5 L758.8 758.3 L758.9 754.1 L759.0 749.9 L759.1 745.7 L759.2 741.5 L759.3 737.3 L759.4 733.1 L759.5 728.9 L759.6 724.7 L759.7 720.5 L759.8 716.3 L759.9 712.1 L760.0 707.9 L760.1 703.7 L760.2 699.5 L760.3 695.3 L760.5 691.1 L760.6 686.9 L760.7 682.7 L760.9 678.5 L761.0 674.3 L761.2 670.1 L761.3 665.9 L761.5 661.7 L761.6 657.5 L761.8 653.3 L762.0 649.1 L762.2 644.9 L762.4 640.7 L762.7 636.5 L762.9 632.3 L763.2 628.1 L763.6 623.9 L763.9 619.7 L764.3 615.5 L764.7 611.3 L765.1 607.1 L765.6 602.9 L766.1 598.7 L766.7 594.5 L767.4 590.3 L768.2 586.1 L769.1 581.9 L770.1 577.7 L771.3 573.5 L772.7 569.3 L774.1 565.3 L775.6 561.3 L777.1 557.3 L778.3 554.2 L783.7 540.3 L789.8 527.8 L796.3 515.0 L807.0 496.2 L813.0 487.5 L824.7 471.7 L836.3 458.0 L843.5 449.9 L853.7 440.6 L864.5 431.3 L871.4 425.6 L883.2 417.4 L889.3 413.7 L901.4 405.9 L906.8 402.9 L918.7 396.6 L928.2 392.4 L936.5 388.4 L948.4 383.4 L954.1 381.2 L966.1 376.8 L972.3 374.7 L984.0 370.7 L993.1 368.2 L1001.7 365.6 L1013.4 362.5 L1019.3 360.9 L1031.0 358.1 L1037.1 356.7 L1048.3 354.3 L1059.6 352.0 L1065.7 351.0 L1077.5 348.8 L1083.5 347.9 L1095.2 345.9 L1104.9 344.5 L1113.0 343.2 L1124.9 341.6 L1130.7 340.9 L1142.6 339.6 L1150.6 338.6 L1160.3 337.6 L1172.5 336.4 L1178.1 335.8 L1189.9 334.9 L1197.5 334.1 L1207.9 333.2 L1219.9 332.4 L1225.8 332.0 L1237.9 331.4 L1245.4 330.8 L1255.5 330.1 L1267.4 329.6 L1273.4 329.3 L1285.0 328.9 L1293.8 328.5 L1302.5 328.0 L1314.2 327.6 L1320.3 327.4 L1332.2 327.1 L1343.1 326.8 L1350.1 326.6 L1362.0 326.5 L1374.2 326.3 L1386.2 326.0 L1393.3 325.9 L1404.0 325.9 L1415.9 325.9 L1422.0 325.9 L1433.4 325.7 L1444.6 325.7 L1451.2 325.7 L1462.9 325.7 L1471.1 325.7 L1480.6 325.7 L1492.3 325.7 L1498.0 325.9 L1509.8 325.9 L1521.7 326.1 L1527.7 326.1 L1539.7 326.3 L1552.1 326.4 L1563.9 326.8 L1575.6 327.2 L1581.7 327.3 L1593.2 327.7 L1605.3 328.2 L1611.6 328.4 L1623.3 328.9 L1635.4 329.5" fill="none" stroke="#004d80" stroke-width="1"/>
<path d="M754.5 909.5 L754.7 905.3 L754.9 901.1 L755.1 896.9 L755.3 892.7 L755.5 888.5 L755.7 884.3 L755.8 880.1 L756.0 875.9 L756.1 871.7 L756.2 867.5 L756.4 863.3 L756.5 859.1 L756.6 854.9 L756.7 850.7 L756.8 846.5 L756.9 842.3 L757.0 838.1 L757.1 833.9 L757.2 829.7 L757.3 825.5 L757.4 821.3 L757.5 817.1 L757.6 812.9 L757.7 808.7 L757.8 804.5 L757.9 800.3 L757.9 796.1 L758.0 791.9 L758.1 787.7 L758.2 783.5 L758.3 779.3 L758.4 775.1 L758.5 770.9 L758.6 766.7 L758.7 762.5 L758.8 758.3 L758.9 754.1 L759.0 749.9 L759.1 745.7 L759.2 741.5 L759.3 737.3 L759.4 733.1 L759.5 728.9 L759.6 724.7 L759.7 720.5 L759.8 716.3 L759.9 712.1 L760.0 707.9 L760.1 703.7 L760.2 699.5 L760.3 695.3 L760.5 691.1 L760.6 686.9 L760.7 682.7 L760.9 678.5 L761.0 674.3 L761.2 670.1 L761.3 665.9 L761.5 661.7 L761.6 657.5 L761.8 653.3 L762.0 649.1 L762.2 644.9 L762.4 640.7 L762.7 636.5 L762.9 632.3 L763.2 628.1 L763.6 623.9 L763.9 619.7 L764.3 615.5 L764.7 611.3 L765.1 607.1 L765.6 602.9 L766.1 598.7 L766.7 594.5 L767.4 590.3 L768.2 586.1 L769.1 581.9 L770.1 577.7 L771.3 573.5 L772.7 569.3 L774.1 565.3 L775.6 561.3 L777.1 557.3 L778.3 554.2" fill="none" stroke="#004d80" stroke-width="3.1" stroke-linecap="round" stroke-linejoin="round"/>
<path d="M783.7 540.3h0M789.8 527.8h0M796.3 515.0h0M807.0 496.2h0M813.0 487.5h0M824.7 471.7h0M836.3 458.0h0M843.5 449.9h0M853.7 440.6h0M864.5 431.3h0M871.4 425.6h0M883.2 417.4h0M889.3 413.7h0M901.4 405.9h0M906.8 402.9h0M918.7 396.6h0M928.2 392.4h0M936.5 388.4h0M948.4 383.4h0M954.1 381.2h0M966.1 376.8h0M972.3 374.7h0M984.0 370.7h0M993.1 368.2h0M1001.7 365.6h0M1013.4 362.5h0M1019.3 360.9h0M1031.0 358.1h0M1037.1 356.7h0M1048.3 354.3h0M1059.6 352.0h0M1065.7 351.0h0M1077.5 348.8h0M1083.5 347.9h0M1095.2 345.9h0M1104.9 344.5h0M1113.0 343.2h0M1124.9 341.6h0M1130.7 340.9h0M1142.6 339.6h0M1150.6 338.6h0M1160.3 337.6h0M1172.5 336.4h0M1178.1 335.8h0M1189.9 334.9h0M1197.5 334.1h0M1207.9 333.2h0M1219.9 332.4h0M1225.8 332.0h0M1237.9 331.4h0M1245.4 330.8h0M1255.5 330.1h0M1267.4 329.6h0M1273.4 329.3h0M1285.0 328.9h0M1293.8 328.5h0M1302.5 328.0h0M1314.2 327.6h0M1320.3 327.4h0M1332.2 327.1h0M1343.1 326.8h0M1350.1 326.6h0M1362.0 326.5h0M1374.2 326.3h0M1386.2 326.0h0M1393.3 325.9h0M1404.0 325.9h0M1415.9 325.9h0M1422.0 325.9h0M1433.4 325.7h0M1444.6 325.7h0M1451.2 325.7h0M1462.9 325.7h0M1471.1 325.7h0M1480.6 325.7h0M1492.3 325.7h0M1498.0 325.9h0M1509.8 325.9h0M1521.7 326.1h0M1527.7 326.1h0M1539.7 326.3h0M1552.1 326.4h0M1563.9 326.8h0M1575.6 327.2h0M1581.7 327.3h0M1593.2 327.7h0M1605.3 328.2h0M1611.6 328.4h0M1623.3 328.9h0M1635.4 329.5h0" fill="none" stroke="#004d80" stroke-width="3.1" stroke-linecap="round"/>
<path d="M754.5 909.5 L754.7 905.5 L754.9 901.5 L755.1 897.5 L755.3 893.5 L755.5 889.5 L755.7 885.5 L755.8 881.5 L756.0 877.5 L756.1 873.5 L756.2 869.5 L756.3 865.5 L756.4 861.5 L756.5 857.5 L756.6 853.5 L756.7 849.5 L756.8 845.5 L756.9 841.5 L757.0 837.5 L757.1 833.5 L757.2 829.5 L757.3 825.5 L757.4 821.5 L757.5 817.5 L757.6 813.5 L757.7 809.5 L757.7 805.5 L757.8 801.5 L757.9 797.5 L758.0 793.5 L758.1 789.5 L758.2 785.5 L758.2 781.5 L758.3 777.5 L758.4 773.5 L758.5 769.5 L758.6 765.5 L758.7 761.5 L758.8 757.5 L758.9 753.5 L759.0 749.5 L759.1 745.5 L759.2 741.5 L759.3 737.5 L759.4 733.5 L759.5 729.5 L759.6 725.5 L759.7 721.5 L759.8 717.5 L759.9 713.5 L760.0 709.5 L760.1 705.5 L760.2 701.5 L760.4 697.5 L760.5 693.5 L760.6 689.5 L760.7 685.5 L760.9 681.5 L761.0 677.5 L761.2 673.5 L761.3 669.5 L761.5 665.5 L761.7 661.5 L761.9 657.5 L762.1 653.5 L762.3 649.5 L762.6 645.5 L762.9 641.5 L763.2 637.5 L763.5 633.5 L763.9 629.5 L764.3 625.5 L764.6 621.5 L765.1 617.5 L765.6 613.5 L766.2 609.5 L766.8 605.5 L767.6 601.5 L768.4 597.5 L769.4 593.5 L770.5 589.5 L771.8 585.5 L773.2 581.7 L774.6 577.9 L776.0 574.1 L777.2 571.1 L782.3 557.9 L788.2 546.0 L794.4 533.8 L804.6 515.9 L810.2 507.6 L821.4 492.5 L832.5 479.5 L839.3 471.8 L849.0 462.9 L859.3 454.0 L865.9 448.7 L877.1 440.8 L882.9 437.3 L894.4 429.9 L899.6 427.0 L910.9 421.1 L920.0 417.0 L927.9 413.2 L939.2 408.5 L944.6 406.4 L956.1 402.1 L962.0 400.1 L973.1 396.4 L981.8 394.0 L990.0 391.5 L1001.1 388.6 L1006.8 387.1 L1017.9 384.4 L1023.7 383.1 L1034.3 380.7 L1045.1 378.5 L1050.9 377.6 L1062.2 375.5 L1067.9 374.7 L1079.1 372.8 L1088.2 371.4 L1096.0 370.2 L1107.3 368.6 L1112.9 368.0 L1124.2 366.7 L1131.8 365.8 L1141.0 364.9 L1152.7 363.7 L1158.0 363.1 L1169.3 362.2 L1176.4 361.5 L1186.4 360.7 L1197.8 359.9 L1203.4 359.5 L1214.9 358.9 L1222.1 358.3 L1231.7 357.7 L1243.1 357.2 L1248.7 357.0 L1259.8 356.5 L1268.2 356.1 L1276.4 355.7 L1287.6 355.3 L1293.4 355.1 L1304.7 354.9 L1315.1 354.6 L1321.8 354.4 L1333.2 354.2 L1344.7 354.0 L1356.2 353.8 L1363.0 353.7 L1373.1 353.7 L1384.5 353.7 L1390.3 353.7 L1401.1 353.5 L1411.8 353.5 L1418.1 353.5 L1429.3 353.5 L1437.1 353.5 L1446.0 353.5 L1457.2 353.5 L1462.6 353.7 L1473.8 353.7 L1485.2 353.9 L1491.0 353.9 L1502.3 354.0 L1514.2 354.2 L1525.4 354.5 L1536.6 354.9 L1542.3 355.1 L1553.3 355.4 L1564.9 355.9 L1570.8 356.1 L1582.0 356.6 L1593.5 357.1 L1599.1 357.4 L1611.0 358.3 L1622.0 359.3 L1633.5 360.8 L1645.2 362.5 L1656.8 365.0 L1662.3 366.3 L1673.8 369.2 L1685.2 373.0 L1696.4 377.5 L1708.1 383.2 L1719.5 390.6 L1731.6 403.8" fill="none" stroke="#806b00" stroke-width="1"/>
<path d="M754.5 909.5 L754.7 905.5 L754.9 901.5 L755.1 897.5 L755.3 893.5 L755.5 889.5 L755.7 885.5 L755.8 881.5 L756.0 877.5 L756.1 873.5 L756.2 869.5 L756.3 865.5 L756.4 861.5 L756.5 857.5 L756.6 853.5 L756.7 849.5 L756.8 845.5 L756.9 841.5 L757.0 837.5 L757.1 833.5 L757.2 829.5 L757.3 825.5 L757.4 821.5 L757.5 817.5 L757.6 813.5 L757.7 809.5 L757.7 805.5 L757.8 801.5 L757.9 797.5 L758.0 793.5 L758.1 789.5 L758.2 785.5 L758.2 781.5 L758.3 777.5 L758.4 773.5 L758.5 769.5 L758.6 765.5 L758.7 761.5 L758.8 757.5 L758.9 753.5 L759.0 749.5 L759.1 745.5 L759.2 741.5 L759.3 737.5 L759.4 733.5 L759.5 729.5 L759.6 725.5 L759.7 721.5 L759.8 717.5 L759.9 713.5 L760.0 709.5 L760.1 705.5 L760.2 701.5 L760.4 697.5 L760.5 693.5 L760.6 689.5 L760.7 685.5 L760.9 681.5 L761.0 677.5 L761.2 673.5 L761.3 669.5 L761.5 665.5 L761.7 661.5 L761.9 657.5 L762.1 653.5 L762.3 649.5 L762.6 645.5 L762.9 641.5 L763.2 637.5 L763.5 633.5 L763.9 629.5 L764.3 625.5 L764.6 621.5 L765.1 617.5 L765.6 613.5 L766.2 609.5 L766.8 605.5 L767.6 601.5 L768.4 597.5 L769.4 593.5 L770.5 589.5 L771.8 585.5 L773.2 581.7 L774.6 577.9 L776.0 574.1 L777.2 571.1" fill="none" stroke="#806b00" stroke-width="3.1" stroke-linecap="round" stroke-linejoin="round"/>
<path d="M782.3 557.9h0M788.2 546.0h0M794.4 533.8h0M804.6 515.9h0M810.2 507.6h0M821.4 492.5h0M832.5 479.5h0M839.3 471.8h0M849.0 462.9h0M859.3 454.0h0M865.9 448.7h0M877.1 440.8h0M882.9 437.3h0M894.4 429.9h0M899.6 427.0h0M910.9 421.1h0M920.0 417.0h0M927.9 413.2h0M939.2 408.5h0M944.6 406.4h0M956.1 402.1h0M962.0 400.1h0M973.1 396.4h0M981.8 394.0h0M990.0 391.5h0M1001.1 388.6h0M1006.8 387.1h0M1017.9 384.4h0M1023.7 383.1h0M1034.3 380.7h0M1045.1 378.5h0M1050.9 377.6h0M1062.2 375.5h0M1067.9 374.7h0M1079.1 372.8h0M1088.2 371.4h0M1096.0 370.2h0M1107.3 368.6h0M1112.9 368.0h0M1124.2 366.7h0M1131.8 365.8h0M1141.0 364.9h0M1152.7 363.7h0M1158.0 363.1h0M1169.3 362.2h0M1176.4 361.5h0M1186.4 360.7h0M1197.8 359.9h0M1203.4 359.5h0M1214.9 358.9h0M1222.1 358.3h0M1231.7 357.7h0M1243.1 357.2h0M1248.7 357.0h0M1259.8 356.5h0M1268.2 356.1h0M1276.4 355.7h0M1287.6 355.3h0M1293.4 355.1h0M1304.7 354.9h0M1315.1 354.6h0M1321.8 354.4h0M1333.2 354.2h0M1344.7 354.0h0M1356.2 353.8h0M1363.0 353.7h0M1373.1 353.7h0M1384.5 353.7h0M1390.3 353.7h0M1401.1 353.5h0M1411.8 353.5h0M1418.1 353.5h0M1429.3 353.5h0M1437.1 353.5h0M1446.0 353.5h0M1457.2 353.5h0M1462.6 353.7h0M1473.8 353.7h0M1485.2 353.9h0M1491.0 353.9h0M1502.3 354.0h0M1514.2 354.2h0M1525.4 354.5h0M1536.6 354.9h0M1542.3 355.1h0M1553.3 355.4h0M1564.9 355.9h0M1570.8 356.1h0M1582.0 356.6h0M1593.5 357.1h0M1599.1 357.4h0M1611.0 358.3h0M1622.0 359.3h0M1633.5 360.8h0M1645.2 362.5h0M1656.8 365.0h0M1662.3 366.3h0M1673.8 369.2h0M1685.2 373.0h0M1696.4 377.5h0M1708.1 383.2h0M1719.5 390.6h0M1731.6 403.8h0" fill="none" stroke="#806b00" stroke-width="3.1" stroke-linecap="round"/>
<path d="M754.3 909.5 L754.5 904.5 L754.8 899.5 L755.0 894.5 L755.2 889.5 L755.5 884.5 L755.7 879.5 L755.9 874.5 L756.1 869.5 L756.2 864.5 L756.4 859.5 L756.5 854.5 L756.7 849.5 L756.8 844.5 L756.9 839.5 L757.0 834.5 L757.2 829.5 L757.3 824.5 L757.4 819.5 L757.5 814.5 L757.7 809.5 L757.8 804.5 L757.9 799.5 L758.0 794.5 L758.1 789.5 L758.2 784.5 L758.3 779.5 L758.4 774.5 L758.5 769.5 L758.6 764.5 L758.7 759.5 L758.8 754.5 L758.9 749.5 L759.0 744.5 L759.2 739.5 L759.3 734.5 L759.4 729.5 L759.5 724.5 L759.6 719.5 L759.7 714.5 L759.9 709.5 L760.0 704.5 L760.1 699.5 L760.2 694.5 L760.3 689.5 L760.5 684.5 L760.6 679.5 L760.7 674.5 L760.9 669.5 L761.0 664.5 L761.1 659.5 L761.3 654.5 L761.4 649.5 L761.6 644.5 L761.7 639.5 L761.9 634.5 L762.1 629.5 L762.2 624.5 L762.4 619.5 L762.6 614.5 L762.8 609.5 L763.0 604.5 L763.2 599.5 L763.5 594.5 L763.7 589.5 L764.0 584.5 L764.3 579.5 L764.7 574.5 L765.1 569.5 L765.6 564.5 L766.0 559.5 L766.4 554.5 L766.9 549.5 L767.5 544.5 L768.1 539.5 L768.8 534.5 L769.7 529.5 L770.6 524.5 L771.7 519.5 L772.9 514.5 L774.3 509.5 L775.9 504.5 L777.7 499.8 L779.4 495.0 L781.2 490.2 L782.6 486.5 L789.0 470.0 L796.3 455.1 L804.1 439.9 L816.8 417.5 L823.9 407.2 L837.9 388.3 L851.7 371.9 L860.2 362.3 L872.4 351.2 L885.3 340.2 L893.5 333.4 L907.5 323.6 L914.8 319.3 L929.2 310.0 L935.6 306.4 L949.8 299.0 L961.1 293.9 L970.9 289.2 L985.1 283.2 L991.9 280.6 L1006.2 275.3 L1013.6 272.8 L1027.5 268.1 L1038.3 265.1 L1048.6 262.0 L1062.5 258.3 L1069.6 256.5 L1083.4 253.1 L1090.7 251.5 L1104.0 248.5 L1117.5 245.8 L1124.8 244.6 L1138.9 242.0 L1146.0 241.0 L1159.9 238.6 L1171.4 236.9 L1181.1 235.4 L1195.2 233.4 L1202.2 232.6 L1216.3 231.0 L1225.8 229.9 L1237.4 228.7 L1252.0 227.2 L1258.6 226.5 L1272.7 225.4 L1281.6 224.5 L1294.1 223.4 L1308.3 222.5 L1315.3 222.0 L1329.8 221.2 L1338.7 220.6 L1350.7 219.8 L1364.9 219.2 L1372.0 218.8 L1385.9 218.3 L1396.3 217.8 L1406.6 217.2 L1420.6 216.8 L1427.8 216.5 L1442.1 216.2 L1455.0 215.9 L1463.4 215.6 L1477.6 215.4 L1492.0 215.2 L1506.3 214.8 L1514.8 214.7 L1527.5 214.7 L1541.7 214.7 L1549.0 214.7 L1562.5 214.5 L1575.9 214.5 L1583.7 214.5 L1597.7 214.5 L1607.4 214.5 L1618.7 214.5 L1632.7 214.5 L1639.4 214.7 L1653.4 214.7 L1667.6 215.0 L1674.8 215.0 L1689.0 215.2 L1703.9 215.4 L1717.8 215.8 L1731.8 216.2 L1739.0 216.4 L1752.8 216.9 L1767.2 217.5 L1774.6 217.7 L1788.6 218.4 L1803.0 219.0 L1810.0 219.4 L1824.9 220.5 L1838.6 221.7 L1853.0 223.6 L1867.7 225.8 L1882.1 228.9 L1889.0 230.5 L1903.3 234.2 L1917.6 238.9 L1931.7 244.5 L1946.2 251.6 L1960.5 260.9 L1975.6 277.3" fill="none" stroke="#800074" stroke-width="1"/>
<path d="M754.3 909.5 L754.5 904.5 L754.8 899.5 L755.0 894.5 L755.2 889.5 L755.5 884.5 L755.7 879.5 L755.9 874.5 L756.1 869.5 L756.2 864.5 L756.4 859.5 L756.5 854.5 L756.7 849.5 L756.8 844.5 L756.9 839.5 L757.0 834.5 L757.2 829.5 L757.3 824.5 L757.4 819.5 L757.5 814.5 L757.7 809.5 L757.8 804.5 L757.9 799.5 L758.0 794.5 L758.1 789.5 L758.2 784.5 L758.3 779.5 L758.4 774.5 L758.5 769.5 L758.6 764.5 L758.7 759.5 L758.8 754.5 L758.9 749.5 L759.0 744.5 L759.2 739.5 L759.3 734.5 L759.4 729.5 L759.5 724.5 L759.6 719.5 L759.7 714.5 L759.9 709.5 L760.0 704.5 L760.1 699.5 L760.2 694.5 L760.3 689.5 L760.5 684.5 L760.6 679.5 L760.7 674.5 L760.9 669.5 L761.0 664.5 L761.1 659.5 L761.3 654.5 L761.4 649.5 L761.6 644.5 L761.7 639.5 L761.9 634.5 L762.1 629.5 L762.2 624.5 L762.4 619.5 L762.6 614.5 L762.8 609.5 L763.0 604.5 L763.2 599.5 L763.5 594.5 L763.7 589.5 L764.0 584.5 L764.3 579.5 L764.7 574.5 L765.1 569.5 L765.6 564.5 L766.0 559.5 L766.4 554.5 L766.9 549.5 L767.5 544.5 L768.1 539.5 L768.8 534.5 L769.7 529.5 L770.6 524.5 L771.7 519.5 L772.9 514.5 L774.3 509.5 L775.9 504.5 L777.7 499.8 L779.4 495.0 L781.2 490.2 L782.6 486.5" fill="none" stroke="#800074" stroke-width="3.1" stroke-linecap="round" stroke-linejoin="round"/>
<path d="M789.0 470.0h0M796.3 455.1h0M804.1 439.9h0M816.8 417.5h0M823.9 407.2h0M837.9 388.3h0M851.7 371.9h0M860.2 362.3h0M872.4 351.2h0M885.3 340.2h0M893.5 333.4h0M907.5 323.6h0M914.8 319.3h0M929.2 310.0h0M935.6 306.4h0M949.8 299.0h0M961.1 293.9h0M970.9 289.2h0M985.1 283.2h0M991.9 280.6h0M1006.2 275.3h0M1013.6 272.8h0M1027.5 268.1h0M1038.3 265.1h0M1048.6 262.0h0M1062.5 258.3h0M1069.6 256.5h0M1083.4 253.1h0M1090.7 251.5h0M1104.0 248.5h0M1117.5 245.8h0M1124.8 244.6h0M1138.9 242.0h0M1146.0 241.0h0M1159.9 238.6h0M1171.4 236.9h0M1181.1 235.4h0M1195.2 233.4h0M1202.2 232.6h0M1216.3 231.0h0M1225.8 229.9h0M1237.4 228.7h0M1252.0 227.2h0M1258.6 226.5h0M1272.7 225.4h0M1281.6 224.5h0M1294.1 223.4h0M1308.3 222.5h0M1315.3 222.0h0M1329.8 221.2h0M1338.7 220.6h0M1350.7 219.8h0M1364.9 219.2h0M1372.0 218.8h0M1385.9 218.3h0M1396.3 217.8h0M1406.6 217.2h0M1420.6 216.8h0M1427.8 216.5h0M1442.1 216.2h0M1455.0 215.9h0M1463.4 215.6h0M1477.6 215.4h0M1492.0 215.2h0M1506.3 214.8h0M1514.8 214.7h0M1527.5 214.7h0M1541.7 214.7h0M1549.0 214.7h0M1562.5 214.5h0M1575.9 214.5h0M1583.7 214.5h0M1597.7 214.5h0M1607.4 214.5h0M1618.7 214.5h0M1632.7 214.5h0M1639.4 214.7h0M1653.4 214.7h0M1667.6 215.0h0M1674.8 215.0h0M1689.0 215.2h0M1703.9 215.4h0M1717.8 215.8h0M1731.8 216.2h0M1739.0 216.4h0M1752.8 216.9h0M1767.2 217.5h0M1774.6 217.7h0M1788.6 218.4h0M1803.0 219.0h0M1810.0 219.4h0M1824.9 220.5h0M1838.6 221.7h0M1853.0 223.6h0M1867.7 225.8h0M1882.1 228.9h0M1889.0 230.5h0M1903.3 234.2h0M1917.6 238.9h0M1931.7 244.5h0M1946.2 251.6h0M1960.5 260.9h0M1975.6 277.3h0" fill="none" stroke="#800074" stroke-width="3.1" stroke-linecap="round"/>
</g>
<g font-family="Liberation Sans, sans-serif" font-size="14" fill="#111">
<text x="752" y="916.0" text-anchor="end">0</text>
<text x="752" y="878.0" text-anchor="end">200</text>
<text x="752" y="841.0" text-anchor="end">400</text>
<text x="752" y="803.0" text-anchor="end">600</text>
<text x="752" y="765.0" text-anchor="end">800</text>
<text x="752" y="728.0" text-anchor="end">1000</text>
<text x="752" y="690.0" text-anchor="end">1200</text>
<text x="752" y="652.0" text-anchor="end">1400</text>
<text x="752" y="615.0" text-anchor="end">1600</text>
<text x="752" y="577.0" text-anchor="end">1800</text>
<text x="752" y="540.0" text-anchor="end">2000</text>
<text x="752" y="502.0" text-anchor="end">2200</text>
<text x="752" y="464.0" text-anchor="end">2400</text>
<text x="752" y="427.0" text-anchor="end">2600</text>
<text x="752" y="389.0" text-anchor="end">2800</text>
<text x="752" y="351.0" text-anchor="end">3000</text>
<text x="752" y="314.0" text-anchor="end">3200</text>
<text x="752" y="276.0" text-anchor="end">3400</text>
<text x="752" y="238.0" text-anchor="end">3600</text>
<text x="752" y="201.0" text-anchor="end">3800</text>
<text x="752" y="163.0" text-anchor="end">4000</text>
<text x="755.5" y="926" text-anchor="middle">0</text>
<text x="824.3" y="926" text-anchor="middle">0.05</text>
<text x="893.2" y="926" text-anchor="middle">0.1</text>
<text x="962.0" y="926" text-anchor="middle">0.15</text>
<text x="1030.8" y="926" text-anchor="middle">0.2</text>
<text x="1099.7" y="926" text-anchor="middle">0.25</text>
<text x="1168.5" y="926" text-anchor="middle">0.3</text>
<text x="1237.4" y="926" text-anchor="middle">0.35</text>
<text x="1306.2" y="926" text-anchor="middle">0.4</text>
<text x="1375.0" y="926" text-anchor="middle">0.45</text>
<text x="1443.9" y="926" text-anchor="middle">0.5</text>
<text x="1512.7" y="926" text-anchor="middle">0.55</text>
<text x="1581.6" y="926" text-anchor="middle">0.6</text>
<text x="1650.4" y="926" text-anchor="middle">0.65</text>
<text x="1719.2" y="926" text-anchor="middle">0.7</text>
<text x="1788.1" y="926" text-anchor="middle">0.75</text>
<text x="1863.0" y="926" text-anchor="middle">0.8</text>
</g>
<text x="1270" y="946" text-anchor="middle" font-family="Liberation Sans, sans-serif" font-size="16" fill="#777">Displacement (in)</text>
<text transform="translate(688.3 539) rotate(-90)" text-anchor="middle" font-family="Liberation Sans, sans-serif" font-size="16" fill="#777">Load vs displacement (lbf)</text>
<rect x="1867.5" y="145.5" width="31" height="31" fill="#fff" stroke="#c8c8c8" shape-rendering="crispEdges"/>
<g fill="none" stroke="#5a5a5a" stroke-width="1.9"><path d="M1878.07 159.58A5.1 5.1 0 0 1 1887.02 157.76"/><path d="M1887.93 162.22A5.1 5.1 0 0 1 1878.98 164.04"/></g>
<path d="M1889.1 154.9v4.6h-4.6z M1876.9 166.9v-4.6h4.6z" fill="#5a5a5a"/>
</svg>
</body></html>
